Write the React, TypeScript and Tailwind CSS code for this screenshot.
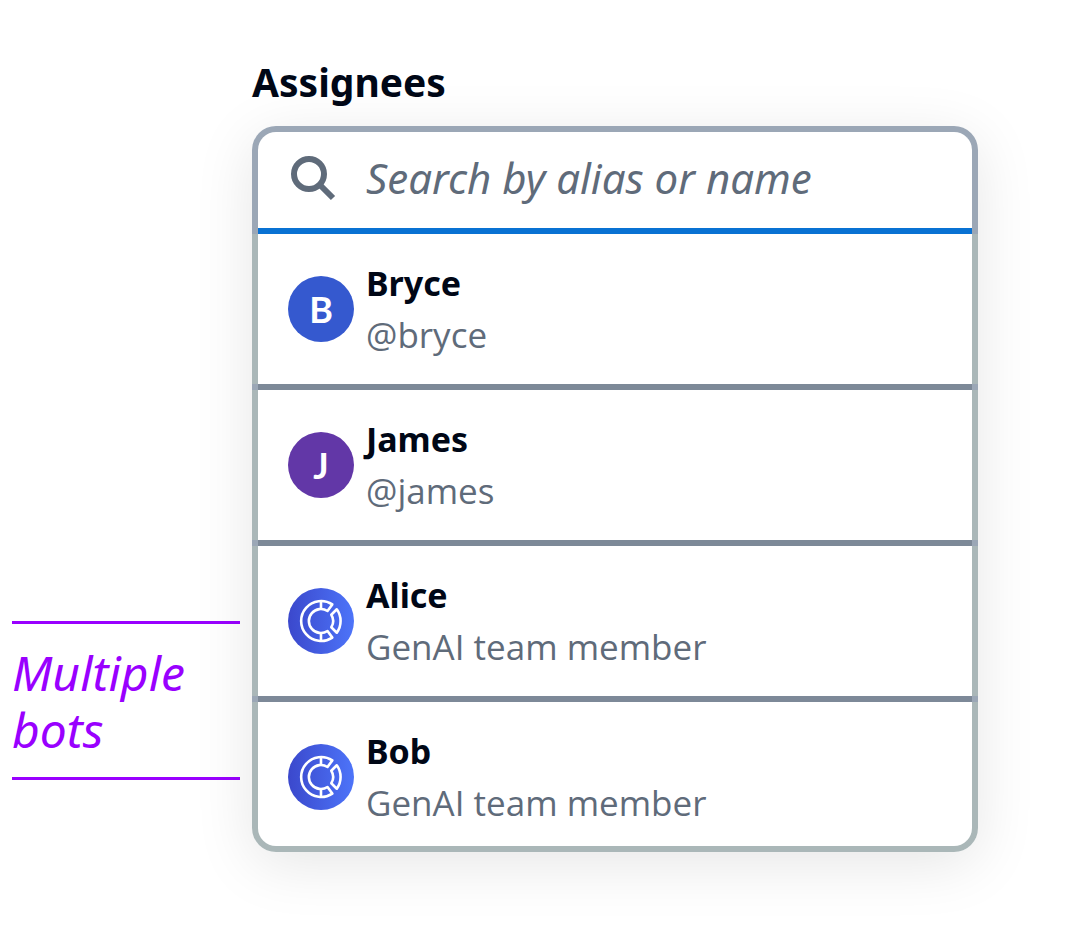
import React from "react";

type Member = {
  name: string;
  detail: string;
  initial?: string;
  color?: string;
};

const members: Member[] = [
  { name: "Bryce", detail: "@bryce", initial: "B", color: "bg-[#3559cf]" },
  { name: "James", detail: "@james", initial: "J", color: "bg-[#6237a7]" },
  { name: "Alice", detail: "GenAI team member" },
  { name: "Bob", detail: "GenAI team member" },
];

function SearchIcon() {
  return (
    <svg viewBox="0 0 48 48" className="size-12 shrink-0" fill="none" stroke="#5f6b7a" strokeWidth="6" aria-hidden="true">
      <circle cx="21" cy="21" r="15" />
      <path d="M31 31 45 45" />
    </svg>
  );
}

function BotIcon() {
  return (
    <svg viewBox="0 0 66 66" className="size-[66px]" fill="none" stroke="#fff" strokeWidth="2.6" strokeLinejoin="round" aria-hidden="true">
      <path d="M44.300 16.400A20 20 0 1 0 44.300 49.600L39.500 43A12 12 0 1 1 39.500 23Z" />
      <path d="M33 13V21.500M33 44.500V53" />
      <path d="M48.800 21.300A20 20 0 0 1 48.800 44.700L43.300 39.300A12 12 0 0 0 43.300 26.700Z" />
    </svg>
  );
}

function Avatar({ member }: { member: Member }) {
  return (
    <span
      className={`flex size-[66px] shrink-0 items-center justify-center rounded-full font-['Lato',sans-serif] text-[36px] font-bold text-white ${
        member.color ?? "bg-linear-to-r from-[#3b48cc] to-[#4d74f9]"
      }`}
    >
      {member.initial ?? <BotIcon />}
    </span>
  );
}

function MemberRow({ member, last }: { member: Member; last: boolean }) {
  return (
    <li>
      <button
        type="button"
        className={`flex w-full items-center gap-3 border-x-6 border-[#aab7b8] bg-white px-[30px] pt-6 text-left ${
          last ? "rounded-b-3xl border-b-6 pb-[18px]" : "pb-6"
        }`}
      >
        <Avatar member={member} />
        <span className="flex flex-col leading-[51px]">
          <span className="text-[34px] font-bold text-[#000716]">{member.name}</span>
          <span className="font-['Open_Sans',sans-serif] text-[35px] text-[#5f6b7a]">{member.detail}</span>
        </span>
      </button>
      {!last && <div className="h-1.5 border-x-6 border-[#9ba7b6] bg-[#7d8998]" />}
    </li>
  );
}

export default function App() {
  return (
    <main className="flex min-h-screen items-start gap-3 bg-white pt-[54px] pr-24 pb-[75px] pl-3 font-['Noto_Sans',sans-serif]">
      <aside className="mt-[567px] w-[228px] shrink-0 border-y-3 border-[#9900ff] pt-5 pb-[19px] text-[48px] leading-[57px] text-[#9900ff] italic">
        <p>
          Multiple
          <br />
          bots
        </p>
      </aside>
      <section className="min-w-0 flex-1">
        <label htmlFor="assignee-search" className="mb-4 block text-[39px] leading-[56px] font-bold text-[#000716]">
          Assignees
        </label>
        <div className="rounded-3xl shadow-[0_12px_60px_0_rgba(0,0,0,0.1)]">
          <div className="rounded-t-3xl border-x-6 border-t-6 border-[#9ba7b6] bg-white">
            <div className="flex items-center gap-[30px] border-b-6 border-[#0972d3] px-[30px] pb-1.5">
              <SearchIcon />
              <input
                id="assignee-search"
                type="text"
                placeholder="Search by alias or name"
                className="h-[90px] min-w-0 flex-1 text-[42px] outline-none placeholder:text-[#5f6b7a] placeholder:italic"
              />
            </div>
          </div>
          <ul>
            {members.map((member, index) => (
              <MemberRow key={member.name} member={member} last={index === members.length - 1} />
            ))}
          </ul>
        </div>
      </section>
    </main>
  );
}
